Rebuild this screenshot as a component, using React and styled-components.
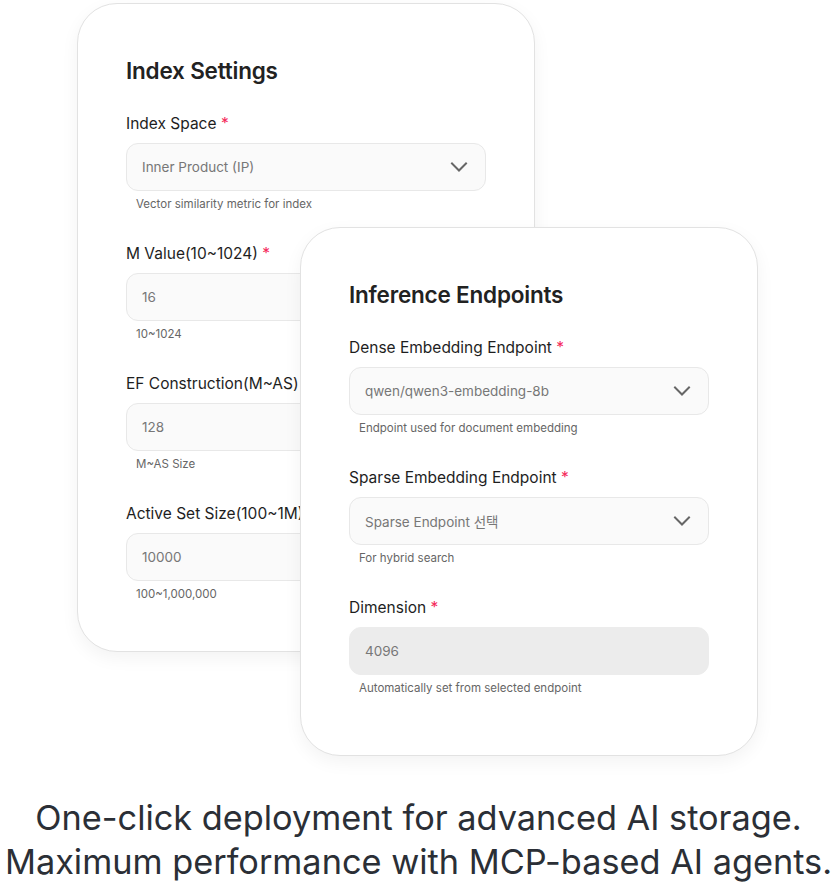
import styled, { createGlobalStyle } from "styled-components";

const GlobalStyle = createGlobalStyle`
  html, body {
    margin: 0;
    padding: 0;
    background: #ffffff;
  }
  body {
    font-family: Inter, "Noto Sans CJK KR", sans-serif;
  }
`;

const indexFields = [
  { label: "Index Space", value: "Inner Product (IP)", help: "Vector similarity metric for index", select: true },
  { label: "M Value(10~1024)", value: "16", help: "10~1024" },
  { label: "EF Construction(M~AS)", value: "128", help: "M~AS Size" },
  { label: "Active Set Size(100~1M)", value: "10000", help: "100~1,000,000" },
];

const endpointFields = [
  { label: "Dense Embedding Endpoint", value: "qwen/qwen3-embedding-8b", help: "Endpoint used for document embedding", select: true },
  { label: "Sparse Embedding Endpoint", value: "Sparse Endpoint 선택", help: "For hybrid search", select: true },
  { label: "Dimension", value: "4096", help: "Automatically set from selected endpoint", disabled: true },
];

const Chevron = () => (
  <svg width="18" height="18" viewBox="0 0 18 18" fill="none">
    <path d="M2 5.5L9 12.5L16 5.5" stroke="#666" strokeWidth="2" strokeLinecap="square" />
  </svg>
);

const Field = ({ label, value, help, select, disabled }) => (
  <FieldBox>
    <Label>
      {label} <Star>*</Star>
    </Label>
    <Input $disabled={disabled}>
      <span>{value}</span>
      {select && <Chevron />}
    </Input>
    <Help>{help}</Help>
  </FieldBox>
);

const App = () => {
  return (
    <Page>
      <GlobalStyle />
      <Stage>
        <Card $bottom={49}>
          <Title>Index Settings</Title>
          {indexFields.map((f) => (
            <Field key={f.label} {...f} />
          ))}
        </Card>
        <FrontCard $bottom={59}>
          <Title>Inference Endpoints</Title>
          {endpointFields.map((f) => (
            <Field key={f.label} {...f} />
          ))}
        </FrontCard>
      </Stage>
      <Caption>
        One-click deployment for advanced AI storage.
        <br />
        Maximum performance with MCP-based AI agents.
      </Caption>
    </Page>
  );
};

const Page = styled.div`
  width: 837px;
  height: 887px;
  overflow: hidden;
  display: flex;
  flex-direction: column;
`;

const Stage = styled.div`
  position: relative;
  height: 757px;
  flex-shrink: 0;
  padding: 3px 0 0 77px;
  box-sizing: border-box;
`;

const Card = styled.div`
  width: 458px;
  box-sizing: border-box;
  background: #ffffff;
  border: 1px solid #e2e2e2;
  border-radius: 40px;
  padding: 48px 48px ${(p) => p.$bottom}px 48px;
  box-shadow: 0 6px 18px rgba(0, 0, 0, 0.05);
  display: flex;
  flex-direction: column;
`;

const FrontCard = styled(Card)`
  position: absolute;
  left: 300px;
  top: 227px;
`;

const Title = styled.h2`
  margin: 0 0 21px 0;
  font-size: 22.5px;
  line-height: 38px;
  font-weight: 600;
  color: #222222;
  letter-spacing: -0.2px;
`;

const FieldBox = styled.div`
  display: flex;
  flex-direction: column;
  margin-bottom: 29px;
  &:last-child {
    margin-bottom: 0;
  }
`;

const Label = styled.div`
  font-size: 15.5px;
  line-height: 24px;
  font-weight: 400;
  color: #1e1e1e;
  margin: 1px 0 7px 0;
`;

const Star = styled.span`
  color: #f5285a;
`;

const Input = styled.div`
  height: 48px;
  box-sizing: border-box;
  border-radius: 12px;
  background: ${(p) => (p.$disabled ? "#ececec" : "#fafafa")};
  border: 1px solid ${(p) => (p.$disabled ? "#ececec" : "#e8e8e8")};
  padding: 0 17px 0 15px;
  display: flex;
  align-items: center;
  justify-content: space-between;
  font-size: 13.5px;
  color: #777777;
`;

const Help = styled.div`
  font-size: 11.5px;
  line-height: 16px;
  color: #666666;
  padding: 5px 0 0 10px;
`;

const Caption = styled.p`
  margin: 0;
  padding-top: 39px;
  text-align: center;
  font-family: Inter, sans-serif;
  font-size: 34.3px;
  line-height: 44px;
  font-weight: 400;
  color: #2b2f36;
  white-space: nowrap;
`;

export default App;
